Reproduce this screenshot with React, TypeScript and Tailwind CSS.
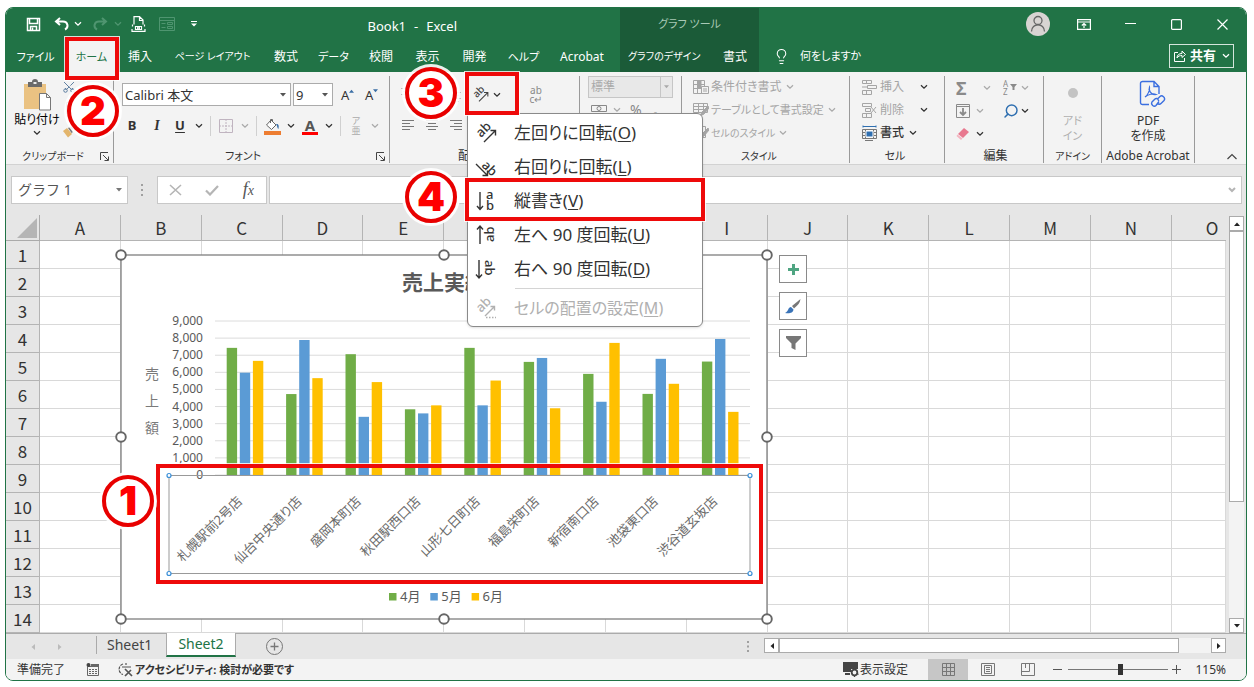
import { ReactNode } from "react"
import { twMerge } from "tailwind-merge"
import { Lightbulb, Scissors, Search } from "lucide-react"

const tabs = [
    { title: 'ファイル', width: 'w-[59px] text-[11px]' },
    { title: 'ホーム', width: 'w-[53px] text-[11px]', active: true },
    { title: '挿入', width: 'w-[44px]' },
    { title: 'ページ レイアウト', width: 'w-[101px] text-[10px]' },
    { title: '数式', width: 'w-[46px]' },
    { title: 'データ', width: 'w-[49px] text-[11px]' },
    { title: '校閲', width: 'w-[46px]' },
    { title: '表示', width: 'w-[47px]' },
    { title: '開発', width: 'w-[47px]' },
    { title: 'ヘルプ', width: 'w-[51px] text-[11px]' },
    { title: 'Acrobat', width: 'w-[66px]' },
]

const columns = ['A', 'B', 'C', 'D', 'E', 'F', 'G', 'H', 'I', 'J', 'K', 'L', 'M', 'N', 'O']
const rows = [1, 2, 3, 4, 5, 6, 7, 8, 9, 10, 11, 12, 13, 14]

const series = [
    { name: '4月', color: '#70AD47' },
    { name: '5月', color: '#5B9BD5' },
    { name: '6月', color: '#FFC000' },
]

const stores = [
    { name: '札幌駅前2号店', sales: [7430, 5980, 6670] },
    { name: '仙台中央通り店', sales: [4730, 7890, 5660] },
    { name: '盛岡本町店', sales: [7060, 3400, 5430] },
    { name: '秋田駅西口店', sales: [3840, 3600, 4070] },
    { name: '山形七日町店', sales: [7430, 4070, 5520] },
    { name: '福島栄町店', sales: [6610, 6840, 3900] },
    { name: '新宿南口店', sales: [5910, 4280, 7720] },
    { name: '池袋東口店', sales: [4740, 6790, 5330] },
    { name: '渋谷道玄坂店', sales: [6630, 7950, 3690] },
]

const ticks = [0, 1000, 2000, 3000, 4000, 5000, 6000, 7000, 8000, 9000]

const menuItems = [
    { label: '左回りに回転', shortcut: 'O', icon: 'ccw' },
    { label: '右回りに回転', shortcut: 'L', icon: 'cw' },
    { label: '縦書き', shortcut: 'V', icon: 'vertical' },
    { label: '左へ 90 度回転', shortcut: 'U', icon: 'up' },
    { label: '右へ 90 度回転', shortcut: 'D', icon: 'down' },
]

function Chevron({ className }: { className?: string }) {
    return (
        <span className={twMerge("w-3 flex-none flex justify-center text-[#333]", className)}>
            <svg width="8" height="6" viewBox="0 0 8 6" fill="none" stroke="currentColor" strokeWidth="1.3"><path d="M1 1.2 4 4.2 7 1.2" /></svg>
        </span>
    )
}

function Caret({ className }: { className?: string }) {
    return <svg width="6" height="4" viewBox="0 0 6 4" className={twMerge("flex-none pointer-events-none fill-[#555]", className)}><path d="M0 0h6L3 3.5z" /></svg>
}

function OrientationIcon({ type, size = 22 }: { type: string, size?: number }) {
    const text = { fontSize: 13, fontWeight: 500, fill: 'currentColor', stroke: 'none' }
    return (
        <svg width={size} height={size} viewBox="0 0 22 22" fill="none" stroke="currentColor" strokeWidth="1.4" className="flex-none overflow-visible">
            {(type === 'ccw' || type === 'settings') && <>
                <text {...text} x="6" y="16" transform="rotate(-45 6 16)">ab</text>
                {type === 'ccw' ? <path d="M9 20 20 9M15.500 8.500H20.500V13.500" /> : <>
                    <path d="M10 19 19 10M15.500 9.500H19.500V13.500" />
                    <path d="M11 20.500h10" strokeDasharray="1.500 1.500" />
                </>}
            </>}
            {type === 'cw' && <>
                <text {...text} x="6" y="10" transform="rotate(45 6 10)">ab</text>
                <path d="M1 8 12 19M12.500 14.500V19.500H7.500" />
            </>}
            {type === 'vertical' && <>
                <text {...text} x="11" y="9">a</text>
                <text {...text} x="11" y="20">b</text>
                <path d="M5 2V19M2 16l3 3.500L8 16" />
            </>}
            {type === 'up' && <>
                <text {...text} x="19" y="18" transform="rotate(-90 19 18)">ab</text>
                <path d="M5 20V2M2 5.500 5 2l3 3.500" />
            </>}
            {type === 'down' && <>
                <text {...text} x="10" y="2" transform="rotate(90 10 2)">ab</text>
                <path d="M4 2V20M1 16.500 4 20l3-3.500" />
            </>}
        </svg>
    )
}

function OrientationMenu() {
    return (
        <div role="menu" className="absolute z-10 -left-px top-full w-[236px] bg-white border border-[#8a8a8a] rounded-md rounded-tl-none pt-[2px] text-[#333] shadow-sm">
            {menuItems.map(({ label, shortcut, icon }) => (
                <button key={label} role="menuitem" className="w-full h-[34px] flex items-center pl-[7px] gap-[17px] text-[17px] leading-6 whitespace-nowrap">
                    <OrientationIcon type={icon} />
                    <span>{label}(<u className="underline-offset-2">{shortcut}</u>)</span>
                </button>
            ))}
            <hr className="ml-[47px] mt-[2px] border-[#d4d4d4]" />
            <button role="menuitem" disabled className="w-full h-[37px] flex items-center pl-[7px] gap-[17px] text-base leading-6 text-[#b0b0b0] whitespace-nowrap">
                <OrientationIcon type="settings" />
                <span>セルの配置の設定(<u className="underline-offset-2">M</u>)</span>
            </button>
        </div>
    )
}

function Group({ label, launcher, className, labelClass, children }: { label: string, launcher?: boolean, className?: string, labelClass?: string, children: ReactNode }) {
    return (
        <section className={twMerge("flex-none mt-1 mb-px border-r border-[#9a9a9a] flex flex-col", className)}>
            <div className="flex-1 min-h-0">{children}</div>
            <div className="h-[14px] flex items-center">
                <h2 className={twMerge("flex-1 text-center text-[11px] leading-[14px] whitespace-nowrap text-[#333]", labelClass)}>{label}</h2>
                {launcher && (
                    <button aria-label={label} className="mr-1">
                        <svg width="9" height="9" viewBox="0 0 9 9" fill="none" stroke="#444"><path d="M.5 8V.5H8M3 3l5 5M8.500 4.500v4h-4" /></svg>
                    </button>
                )}
            </div>
        </section>
    )
}

function TitleBar() {
    return (
        <header className="bg-[#217346] text-white grid grid-cols-[614px_139px_1fr] grid-rows-[32px_32px]">
            <div className="flex items-center pl-[20px] pr-[163px]">
                <button aria-label="上書き保存">
                    <svg width="15" height="15" viewBox="0 0 15 15" fill="none" stroke="white" strokeWidth="1.500"><path d="M1.500 1.500h12v12h-12zM3.500 2v4.500h8V2M4.500 13.500v-4h6v4" /><path d="M6.500 10.500v3" /></svg>
                </button>
                <button aria-label="元に戻す" className="ml-[13px]">
                    <svg width="15" height="14" viewBox="0 0 15 14" fill="none" stroke="white" strokeWidth="2"><path d="M6 1 2 4.500 6 8M2 4.500h7c5 0 6 6 2 8" /></svg>
                </button>
                <Chevron className="text-white ml-[3px]" />
                <button aria-label="やり直し" className="ml-[9px]">
                    <svg width="15" height="14" viewBox="0 0 15 14" fill="none" stroke="#4f9570" strokeWidth="2"><path d="M9 1l4 3.500L9 8M13 4.500H6c-5 0-6 6-2 8" /></svg>
                </button>
                <Chevron className="text-[#4f9570] ml-1" />
                <button aria-label="印刷プレビュー" className="ml-[7px]">
                    <svg width="15" height="16" viewBox="0 0 15 16" fill="none" stroke="white" strokeWidth="1.200"><path d="M3 8.500V.6h5.500L12 4v4.500M8.500 1v3.500H12M1.500 8.500v2M13.500 8.500v2M4.500 10.500h6v3h-6zM1 13v2.400h13V13" /><circle cx="7.500" cy="12" r="1" /></svg>
                </button>
                <button aria-label="フォーム" className="ml-[13px]">
                    <svg width="16" height="14" viewBox="0 0 16 14" fill="none" stroke="#4f9570"><path d="M.5.5h15v13H.5zM.5 3.500h15M2.500 6.500h4M2.500 10.500h4M8.500 5.500h5v2h-5zM8.500 9.500h5v2h-5z" /></svg>
                </button>
                <button aria-label="カスタマイズ" className="ml-4">
                    <svg width="6" height="6" viewBox="0 0 6 6" fill="white"><path d="M0 0h6v1H0zM0 2.500h6L3 5.500z" /></svg>
                </button>
                <h1 className="ml-auto flex gap-2 text-[13px] leading-4 whitespace-nowrap pt-1"><span>Book1</span><span>-</span><span>Excel</span></h1>
            </div>
            <div className="bg-[#1b5b38] text-[#a9c9b6] text-[11px] leading-8 text-center">グラフ ツール</div>
            <div className="flex items-center justify-end pr-[18px]">
                <button aria-label="アカウント" className="size-6 rounded-full bg-[#d8d4d2] flex justify-center items-center">
                    <svg width="16" height="18" viewBox="0 0 16 18" fill="none" stroke="#666" strokeWidth="1.300"><circle cx="8" cy="5.500" r="4" /><path d="M1.500 16.500c0-9 13-9 13 0" /></svg>
                </button>
                <button aria-label="リボンの表示オプション" className="ml-[27px]">
                    <svg width="14" height="11" viewBox="0 0 14 11" fill="none" stroke="white" strokeWidth="1.200"><path d="M.6.6h12.800v9.800H.6zM.6 3h12.800M7 9V5M4.800 6.500 7 4.500l2.200 2" /></svg>
                </button>
                <button aria-label="最小化" className="ml-[34px]"><svg width="11" height="10" stroke="white"><path d="M0 4.500h11" /></svg></button>
                <button aria-label="最大化" className="ml-[35px]"><svg width="11" height="11" fill="none" stroke="white" strokeWidth="1.200"><rect x=".6" y=".6" width="9.800" height="9.800" rx="1" /></svg></button>
                <button aria-label="閉じる" className="ml-[35px]"><svg width="11" height="11" stroke="white" strokeWidth="1.200"><path d="M.5.5l10 10M10.500.5l-10 10" /></svg></button>
            </div>
            <nav className="flex text-xs whitespace-nowrap">
                {tabs.map(({ title, width, active }) => (
                    <button key={title} className={twMerge("flex-none h-full pt-0.5", width, active && 'bg-[#f3f3f3] text-[#217346]')}>{title}</button>
                ))}
            </nav>
            <div className="bg-[#1b5b38] flex items-center pt-0.5 pl-2 gap-5 text-xs whitespace-nowrap">
                <button className="w-[75px] text-[10px] text-left">グラフのデザイン</button>
                <button>書式</button>
            </div>
            <div className="flex items-center pl-[14px] pr-3">
                <Lightbulb size={17} strokeWidth={1.5} />
                <button className="ml-[10px] text-[11px]">何をしますか</button>
                <button className="ml-auto h-6 w-[65px] border border-[#d5e5dc] flex items-center pl-[3px] gap-1 text-[13px] font-bold">
                    <svg width="13" height="12" viewBox="0 0 13 12" fill="none" stroke="white"><path d="M5 2.500H1.500v9h10V8M4 8c0-3 2-4.500 5-4.500V1l3.500 3.500L9 7.500V5.500C7 5.500 5 6 4 8z" /></svg>
                    共有
                    <Chevron className="text-white w-2 ml-0.5" />
                </button>
            </div>
        </header>
    )
}

function Separator() {
    return <span className="w-px h-5 mx-[2px] bg-[#d0d0d0]" />
}

function AlignLines({ className, x }: { className?: string, x: number }) {
    return <svg width="12" height="11" viewBox="0 0 12 11" fill="none" stroke="currentColor" className={twMerge("flex-none text-[#777]", className)}><path d={`M0 .5h12M${x} 3.500h8M0 6.500h12M${x} 9.500h8`} /></svg>
}

function Ribbon() {
    return (
        <div className="h-[93px] bg-[#f3f3f3] border-b border-[#d2d2d2] flex">
            <Group label="クリップボード" launcher className="w-[108px]" labelClass="text-[10px]">
                <div className="flex pl-2">
                    <button className="w-[46px] flex flex-col items-center text-xs leading-4 pt-[3px] whitespace-nowrap">
                        <svg width="30" height="32" viewBox="0 0 30 32">
                            <path fill="#EAC282" d="M2 5h22v25H2z" />
                            <path fill="#6b6b6b" d="M6 3h4a3 3 0 0 1 6 0h4v5H6z" />
                            <path fill="#eee" d="M11.500 3h3v2h-3z" />
                            <path fill="white" stroke="#777" d="M17.500 14.500h7l4 4v12.500h-11zM24.500 14.500v4h4" />
                        </svg>
                        <span className="mt-[1px]">貼り付け</span>
                        <Chevron className="mt-[2px]" />
                    </button>
                    <div className="flex flex-col gap-2 pt-1 pl-[2px]">
                        <button aria-label="切り取り"><Scissors size={14} strokeWidth={1.5} className="text-[#4a6f96] -rotate-90" /></button>
                        <button aria-label="コピー" className="pl-1"><svg width="13" height="15" viewBox="0 0 13 15" fill="#fff" stroke="#777"><path d="M.5.5h7v11h-7zM4.500 3.500h5l3 3v8h-8zM6 8.500h5M6 10.500h5M6 12.500h5" /></svg></button>
                        <button aria-label="書式のコピー"><svg width="13" height="13" viewBox="0 0 13 13"><path fill="#E3B56C" d="M1 6l4-3 5 6-4 3.500z" /><path fill="#777" d="M6 3l2-1 4-2 1 2-3 3 1 2-1.500 1z" /></svg></button>
                    </div>
                </div>
            </Group>
            <Group label="フォント" launcher className="w-[276px] pl-2" labelClass="pr-3">
                <div className="flex items-center pt-[7px]">
                    <div className="w-[169px] h-[23px] flex items-center bg-white border border-[#ababab] pr-1">
                        <select aria-label="フォント名" className="appearance-none flex-1 pl-0.5 text-[13px] leading-5 text-[#333]"><option>Calibri 本文</option></select>
                        <Caret />
                    </div>
                    <div className="w-10 h-[23px] ml-[2px] flex items-center bg-white border border-[#ababab] pr-1">
                        <select aria-label="フォント サイズ" className="appearance-none flex-1 pl-0.5 text-[13px] leading-5 text-[#333]"><option>9</option></select>
                        <Caret />
                    </div>
                    <button aria-label="拡大" className="ml-2 w-4 flex text-[13px] leading-5 text-[#333]">A<Caret className="rotate-180 fill-[#3a6ea5] w-[5px] mt-1" /></button>
                    <button aria-label="縮小" className="ml-[8px] w-4 flex text-[13px] leading-5 text-[#333]">A<Caret className="fill-[#3a6ea5] w-[5px] mt-1" /></button>
                </div>
                <div className="h-[40px] flex items-center gap-[3px] text-[13px] text-[#333]">
                    <button className="w-5 font-bold">B</button>
                    <button className="w-5 ml-[2px] text-sm font-bold italic font-[family-name:'Liberation_Serif',serif]">I</button>
                    <button className="w-5 font-bold underline underline-offset-2">U</button>
                    <Chevron />
                    <Separator />
                    <button aria-label="罫線" className="w-5 flex justify-center">
                        <svg width="14" height="14" fill="none" stroke="#c0b4c0"><path d="M.5.5h13v13H.5z" /><path d="M7 0v14M0 7h14" strokeDasharray="2 1" /></svg>
                    </button>
                    <Chevron className="text-[#aaa]" />
                    <Separator />
                    <button aria-label="塗りつぶしの色" className="w-5 flex justify-center">
                        <svg width="17" height="17" viewBox="0 0 17 17" fill="none"><path d="M7 2 2.500 7l5 4.500L12 7z" fill="#fff" stroke="#666" /><path d="M6.500 5V1.500h2V4" stroke="#666" /><path d="M12 6c3-.5 3 2 2.500 5-1.500-.5-1-3-2.500-5z" fill="#3a6ea5" /><path d="M0 13h17v4H0z" fill="#ED7D31" /></svg>
                    </button>
                    <Chevron />
                    <button aria-label="フォントの色" className="w-5 flex flex-col items-center text-[15px] leading-[14px] font-bold text-[#555]">A<span className="w-4 h-[3px] bg-[#ff0000]" /></button>
                    <Chevron />
                    <Separator />
                    <button className="w-5 flex flex-col items-center text-[9px] leading-[10px] text-[#aaa]"><span>ア</span><span>亜</span></button>
                    <Chevron className="text-[#aaa]" />
                </div>
            </Group>
            <Group label="配置" launcher className="w-[190px]" labelClass="pr-4 text-xs">
                <div className="flex h-[37px] pl-[11px] text-[#777]">
                    <AlignLines x={2} className="mt-3 text-[#bbb]" />
                    <AlignLines x={2} className="mt-3 ml-[12px] text-[#bbb]" />
                    <AlignLines x={2} className="mt-4 ml-[12px] text-[#bbb]" />
                    <div className="relative ml-[7px] flex">
                        <button aria-label="方向" className="w-[46px] flex items-center pl-1 text-[#444]">
                            <OrientationIcon type="ccw" size={17} /><Chevron className="ml-0.5" />
                        </button>
                        <OrientationMenu />
                    </div>
                    <button aria-label="折り返し" className="ml-[10px] w-6 text-[10px] leading-[9px] text-[#888]"><span className="block">ab</span><span className="block">c↵</span></button>
                </div>
                <div className="flex gap-3 pl-[12px] pt-[7px]">
                    <AlignLines x={0} />
                    <AlignLines x={2} />
                    <AlignLines x={4} />
                </div>
            </Group>
            <Group label="数値" launcher className="w-[102px] pl-2" labelClass="text-xs">
                <div className="w-[85px] h-[22px] flex items-center bg-[#e8e8e8] border border-[#c6c6c6]">
                    <select aria-label="表示形式" disabled className="appearance-none flex-1 pl-0.5 text-xs text-[#aaa] opacity-100"><option>標準</option></select>
                    <span className="w-3 h-full border-l border-[#c6c6c6] flex items-center justify-center"><Caret className="fill-[#aaa] w-[5px]" /></span>
                </div>
                <div className="flex items-start h-[22px] pt-0.5 pl-[3px] text-[#888]">
                    <svg width="16" height="12" viewBox="0 0 16 12" fill="none" stroke="currentColor" className="mt-1"><path d="M.5 1.500h15v6H.5z" /><circle cx="8" cy="4.500" r="2" /><path d="M1 10.500h7" /></svg>
                    <Chevron className="text-[#aaa] ml-1 mt-[7px]" />
                    <span className="ml-[7px] text-sm">%</span>
                    <span className="ml-[11px] text-lg leading-4 font-bold">,</span>
                </div>
            </Group>
            <Group label="スタイル" className="w-[168px] pl-[11px]" labelClass="pr-6 text-[10px]">
                <div className="text-[10px] leading-4 text-[#a5a5a5] whitespace-nowrap flex flex-col gap-[7px] pt-[3px]">
                    <button className="flex items-center gap-0.5 text-xs leading-4">
                        <svg width="16" height="14" viewBox="0 0 16 14" fill="none" stroke="currentColor"><path d="M.5.500h11v13H.5zM.5 4.500h11M.5 8.500h11M4.500 0v13" /><path d="M5 1h3v7H5z" fill="currentColor" /><path d="M8.500 6.500h7v7h-7z" fill="#f3f3f3" /><path d="M10 9h4M10 11h4" /></svg>
                        条件付き書式<Chevron className="text-[#aaa]" />
                    </button>
                    <button className="flex items-center gap-0.5 text-[11px] leading-4">
                        <svg width="16" height="14" viewBox="0 0 16 14" fill="none" stroke="currentColor"><path d="M.5.500h14v9H.5zM0 3.500h14M0 6.500h14M5.500 0v9M10.500 0v9" /><path d="M15 3 9 9l-2 4 4-2 5-6z" fill="currentColor" /></svg>
                        テーブルとして書式設定<Chevron className="text-[#aaa]" />
                    </button>
                    <button className="flex items-center gap-0.5">
                        <svg width="16" height="14" viewBox="0 0 16 14" fill="none" stroke="currentColor"><path d="M.5.500h12v11H.5z" /><path d="M15 2 9 8l-2 4 4-2 5-6z" fill="currentColor" /></svg>
                        セルのスタイル<Chevron className="text-[#aaa]" />
                    </button>
                </div>
            </Group>
            <Group label="セル" className="w-[95px] pl-3" labelClass="pr-4">
                <div className="text-xs leading-4 text-[#a5a5a5] whitespace-nowrap flex flex-col gap-[7px] pt-[3px]">
                    <button className="flex items-center gap-[3px]">
                        <svg width="15" height="15" viewBox="0 0 15 15" fill="none" stroke="currentColor"><path d="M.5.500h9v3h-9zM4.500 0v3.500M5.500 5.500h9v3h-9zM0 7h5M.5 10.500h9v4h-9zM4.500 10.500v4" /></svg>
                        挿入<Chevron className="ml-[11px]" />
                    </button>
                    <button className="flex items-center gap-[3px]">
                        <svg width="15" height="15" viewBox="0 0 15 15" fill="none" stroke="currentColor"><path d="M.5.500h9v3h-9zM3.500 5.500h5v3h-5zM9 4l5 6M14 4l-5 6M.5 10.500h9v4h-9zM4.500 10.500v4" /></svg>
                        削除<Chevron className="ml-[11px]" />
                    </button>
                    <button className="flex items-center gap-[3px] text-[#333] font-medium">
                        <svg width="15" height="16" viewBox="0 0 15 16" fill="none" stroke="#777"><path d="M.5 4.500h14v9H.5zM0 7.500h15M0 10.500h15M3.500 4v10M11.500 4v10M3 15.500h8" /><path d="M4 6h7v6H4z" fill="#2f6fb0" stroke="#fff" /><path d="M1 .5v2M14 .5v2M1 1.500h13" stroke="#2f6fb0" /></svg>
                        書式<Chevron />
                    </button>
                </div>
            </Group>
            <Group label="編集" className="w-[99px] pl-[11px]" labelClass="pr-2 text-xs">
                <div className="grid grid-cols-[17px_30px_16px_18px] auto-rows-[23px] items-center text-[#8a8a8a]">
                    <span className="text-lg leading-5 font-bold">Σ</span>
                    <Chevron className="ml-2 text-[#aaa]" />
                    <svg width="15" height="15" viewBox="0 0 15 15" fill="currentColor"><text x="0" y="7" fontSize="8">A</text><text x="0" y="15" fontSize="8">Z</text><path d="M7 4h7l-2.500 3v3h-2V7z" /></svg>
                    <Chevron className="text-[#aaa]" />
                    <svg width="14" height="14" viewBox="0 0 14 14" fill="none" stroke="currentColor"><path d="M.5.500h13v13H.5zM.5 2.500h13" /><path d="M7 4v7M4 8l3 3 3-3" strokeWidth="1.800" /></svg>
                    <Chevron className="text-[#aaa] ml-px" />
                    <Search size={16} strokeWidth={2.2} className="text-[#2f6fb0] -scale-x-100" />
                    <Chevron />
                    <svg width="14" height="14" viewBox="0 0 14 14"><path d="M8 1l5 4-6 6-5-4z" fill="#E8788F" /><path d="M1.500 7.500l5 4L5 13 .5 9z" fill="#F4B5C1" /></svg>
                    <Chevron className="ml-px" />
                </div>
            </Group>
            <Group label="アドイン" className="w-[58px]" labelClass="text-[10px]">
                <div className="flex flex-col items-center pt-3 text-[11px] leading-[15px] text-[#b0b0b0]">
                    <span className="size-[10px] rounded-full bg-[#c3c3c3] mb-[15px]" />
                    <span>アド</span>
                    <span>イン</span>
                </div>
            </Group>
            <Group label="Adobe Acrobat" className="w-[93px]" labelClass="text-xs leading-[14px]">
                <button className="w-full flex flex-col items-center pt-1 text-xs leading-[15px] text-[#333]">
                    <svg width="27" height="29" viewBox="0 0 27 29" fill="none" stroke="#3B6FE0" strokeWidth="1.400" className="ml-2 mb-1">
                        <path d="M10 24.500H3.500a2 2 0 0 1-2-2v-19a2 2 0 0 1 2-2H15l5 5V14M15 1.500v5h5" />
                        <path d="M6 17c3-2 5-7 4.500-10C9 10 12 15 17 14.500c-3-1.500-8 0-11 2.500z" strokeWidth="1.200" />
                        <path d="M18 19.500l3-3c2-2 6 1.500 4 4l-3 3c-1 1-3 1-4-.5M20 21l-1-1M20 21.500l-3 4c-2 2-5.500-1-4-3.500l3-3c1-1 3-.5 3.500.5" />
                    </svg>
                    <span>PDF</span>
                    <span>を作成</span>
                </button>
            </Group>
            <button aria-label="リボンを折りたたむ" className="ml-auto self-end mb-1 mr-[9px]">
                <svg width="10" height="7" fill="none" stroke="#444" strokeWidth="1.200"><path d="M.5 6 5 1.500 9.500 6" /></svg>
            </button>
        </div>
    )
}

function FormulaBar() {
    return (
        <div className="h-[50px] bg-[#e6e6e6] pt-[11px] pl-[5px] pr-1 flex items-start">
            <div className="w-[117px] h-7 bg-white border border-[#c8c8c8] flex items-center pr-[5px]">
                <input aria-label="名前ボックス" defaultValue="グラフ 1" className="flex-1 min-w-0 pl-1.5 text-sm text-[#555] outline-none [font-feature-settings:normal]" />
                <Caret className="fill-[#777]" />
            </div>
            <svg width="3" height="12" className="mx-[13px] mt-2 fill-[#a0a0a0]"><path d="M0 0h2v2H0zM0 5h2v2H0zM0 10h2v2H0z" /></svg>
            <div className="w-[110px] h-7 bg-white border border-[#c8c8c8] flex items-center pl-[11px] pr-3 justify-between">
                <button aria-label="キャンセル"><svg width="13" height="12" stroke="#b5b5b5" strokeWidth="1.600"><path d="M1 1l11 10M12 1 1 11" /></svg></button>
                <button aria-label="入力"><svg width="14" height="11" fill="none" stroke="#b5b5b5" strokeWidth="2.200"><path d="M1 5.500 5 9.500 13 1" /></svg></button>
                <button aria-label="関数の挿入" className="italic text-lg leading-5 text-[#555] font-[family-name:'Liberation_Serif',serif]">f<span className="text-sm">x</span></button>
            </div>
            <div className="ml-[2px] flex-1 h-7 bg-white border border-[#c8c8c8] flex items-center pr-[5px]">
                <input aria-label="数式バー" className="flex-1 min-w-0 px-2 text-sm outline-none" />
                <svg width="8" height="6" fill="none" stroke="#b5b5b5" strokeWidth="2"><path d="M1 1l3 3 3-3" /></svg>
            </div>
        </div>
    )
}

function Chart() {
    const base = 220
    const scale = 154 / 9000
    const handles = [[0, 0], [323, 0], [646, 0], [0, 182], [646, 182], [0, 364], [323, 364], [646, 364]]
    return (
        <svg width="646" height="364" viewBox="0 0 646 364" className="overflow-visible">
            <rect width="646" height="364" fill="white" stroke="#7f7f7f" strokeWidth="1.300" />
            <text x="323" y="35" textAnchor="middle" fontSize="21" fontWeight="bold" fill="#595959">売上実績</text>
            {ticks.map(tick => (
                <g key={tick}>
                    <path d={`M94 ${base - tick * scale}H629`} stroke="#dcdcdc" />
                    <text x="82" y={base - tick * scale + 4} textAnchor="end" fontSize="12" fill="#595959">{tick.toLocaleString('en-US')}</text>
                </g>
            ))}
            {['売', '上', '額'].map((char, i) => (
                <text key={char} x="31" y={124 + i * 27} textAnchor="middle" fontSize="14" fill="#7a7a7a">{char}</text>
            ))}
            {stores.map(({ name, sales }, i) => (
                <g key={name}>
                    {sales.map((value, j) => (
                        <rect key={j} x={105.7 + i * 59.4 + j * 13.1} y={base - value * scale} width="10.4" height={value * scale} fill={series[j].color} />
                    ))}
                    <text x={122 + i * 59.4} y="247" transform={`rotate(-45 ${122 + i * 59.4} 247)`} textAnchor="end" fontSize="13" fill="#6b6b6b">{name}</text>
                </g>
            ))}
            <rect x="48" y="220.500" width="581" height="98" fill="none" stroke="#999" />
            {[[48, 220.5], [629, 220.5], [48, 318.5], [629, 318.5]].map(([x, y]) => (
                <circle key={`${x}-${y}`} cx={x} cy={y} r="2" fill="white" stroke="#3a8fd8" strokeWidth="1.200" />
            ))}
            {series.map(({ name, color }, i) => (
                <g key={name}>
                    <rect x={268 + i * 41.3} y="338" width="7.500" height="7.500" fill={color} />
                    <text x={279 + i * 41.3} y="346" fontSize="13" fill="#595959">{name}</text>
                </g>
            ))}
            {handles.map(([x, y]) => (
                <circle key={`${x}-${y}`} cx={x} cy={y} r="4.800" fill="white" stroke="#666" strokeWidth="1.900" />
            ))}
        </svg>
    )
}

function Sheet() {
    return (
        <div className="relative flex bg-[#e6e6e6]">
            <div className="flex-1 min-w-0">
                <table className="w-full table-fixed border-separate border-spacing-0 bg-white text-[#333] font-[family-name:'Noto_Sans_CJK_JP',sans-serif] [font-feature-settings:normal]">
                    <thead>
                        <tr className="h-[26px] bg-[#e6e6e6]">
                            <th className="w-[34px] p-0 border-r border-b border-[#aaa]">
                                <svg width="20" height="20" className="ml-[11px]" fill="#b5b5b5"><path d="M20 0v20H0z" /></svg>
                            </th>
                            {columns.map(column => (
                                <th key={column} className={twMerge("p-0 border-r border-b border-[#b4b4b4] text-[17px] leading-5 font-normal", column === 'O' && 'w-[54px] pl-[26px] border-r-0')}>{column}</th>
                            ))}
                        </tr>
                    </thead>
                    <tbody>
                        {rows.map(row => (
                            <tr key={row} className="h-7">
                                <th className="p-0 bg-[#e6e6e6] border-r border-b border-[#b4b4b4] text-[17px] leading-5 font-normal">{row}</th>
                                {columns.map(column => <td key={column} className="p-0 border-r border-b border-[#d9d9d9]"></td>)}
                            </tr>
                        ))}
                    </tbody>
                </table>
            </div>
            <div className="w-[15px] ml-[3px] mr-[2px] mt-px bg-[#f3f3f3] flex flex-col">
                <button aria-label="上へ" className="h-[15px] bg-white border border-[#ababab] flex items-center justify-center"><Caret className="rotate-180 w-2 fill-[#222]" /></button>
                <div className="h-[271px] bg-white border border-[#ababab]"></div>
                <button aria-label="下へ" className="mt-auto h-[15px] bg-white border border-[#ababab] flex items-center justify-center"><Caret className="w-2 fill-[#222]" /></button>
            </div>
            <div className="absolute left-[115px] top-10 flex gap-3">
                <Chart />
                <div className="flex flex-col gap-[9px]">
                    <button aria-label="グラフ要素" className="size-7 bg-white border border-[#8a8a8a] flex items-center justify-center"><svg width="11" height="11" stroke="#4fa582" strokeWidth="3"><path d="M5.500 0v11M0 5.500h11" /></svg></button>
                    <button aria-label="グラフ スタイル" className="size-7 bg-white border border-[#8a8a8a] flex items-center justify-center"><svg width="16" height="15" viewBox="0 0 16 15"><path d="M15.500 0 7 7l2 2.500C13 6 15 4 15.500 0z" fill="#777" /><path d="M6 8c-3 0-2 4-6 6 4 .5 8 .5 8.500-3.500z" fill="#3a74b8" /></svg></button>
                    <button aria-label="グラフ フィルター" className="size-7 bg-white border border-[#8a8a8a] flex items-center justify-center"><svg width="15" height="14"><path d="M0 0h15v2L9.500 7.500V14l-4-2V7.500L0 2z" fill="#777" /></svg></button>
                </div>
            </div>
        </div>
    )
}

function SheetTabs() {
    return (
        <div className="h-[26px] bg-[#e6e6e6] border-t border-[#ababab] flex text-[#444]">
            <div className="w-[90px] flex items-center pl-6 gap-[21px]">
                <Caret className="rotate-90 fill-[#bbb]" />
                <Caret className="-rotate-90 fill-[#bbb]" />
            </div>
            <button className="mt-0.5 mb-[5px] pl-[10px] w-[70px] border-l border-[#aaa] text-left text-sm leading-4">Sheet1</button>
            <button className="w-[70px] h-[24px] -mt-px bg-white border-x border-x-[#ababab] border-b-2 border-b-[#217346] text-sm leading-5 text-[#217346]">Sheet2</button>
            <button aria-label="新しいシート" className="ml-[30px] self-center">
                <svg width="17" height="17" fill="none" stroke="#777"><circle cx="8.500" cy="8.500" r="8" /><path d="M8.500 4.500v8M4.500 8.500h8" strokeWidth="1.300" /></svg>
            </button>
            <svg width="3" height="11" className="ml-auto mr-[14px] self-center fill-[#a0a0a0]"><path d="M0 0h2v2H0zM0 4.500h2v2H0zM0 9h2v2H0z" /></svg>
            <div className="w-[462px] h-[15px] mr-5 mt-1 bg-[#f3f3f3] flex">
                <button aria-label="左へ" className="w-[15px] bg-white border border-[#ababab] flex items-center justify-center"><Caret className="rotate-90 flex-none w-2 fill-[#222]" /></button>
                <div className="w-[400px] bg-white border border-[#ababab]"></div>
                <button aria-label="右へ" className="ml-auto w-[15px] bg-white border border-[#ababab] flex items-center justify-center"><Caret className="-rotate-90 flex-none w-2 fill-[#222]" /></button>
            </div>
        </div>
    )
}

function StatusBar() {
    return (
        <footer className="h-[21px] bg-[#f3f3f3] flex items-center pl-[11px] pr-5 text-xs leading-4 text-[#333] whitespace-nowrap">
            <span>準備完了</span>
            <svg width="13" height="13" viewBox="0 0 13 13" fill="none" stroke="#666" className="ml-[21px]"><path d="M1.500 3.500h11v9h-11z" /><path d="M3 6.500h8M3 8.500h8M3 10.500h8" strokeDasharray="2 1" /><path d="M5 1h8v3H5z" fill="#666" stroke="none" /><circle cx="2.500" cy="2" r="2" fill="#444" stroke="none" /></svg>
            <button className="ml-[18px] flex items-center gap-0.5 text-[11px] font-bold">
                <svg width="16" height="14" viewBox="0 0 16 14" fill="none" stroke="#555" strokeWidth="1.200"><path d="M6 1a5.500 5.500 0 0 0 0 10.500" strokeDasharray="3 1" /><path d="M9 0v2M5 4h9" /><path d="M8 6l7 7M14 7l-6 6" strokeWidth="1.700" /></svg>
                アクセシビリティ: 検討が必要です
            </button>
            <button className="ml-auto flex items-center gap-px">
                <svg width="16" height="15" viewBox="0 0 16 15"><path d="M0 0h15v7H8v3H0zM2 11h5v2H2z" fill="#444" /><circle cx="11.500" cy="10.500" r="2.800" fill="#f3f3f3" stroke="#444" strokeWidth="1.800" /><path d="M11.500 6v2M11.500 13v2M7.500 8.500l1.500 1M14 11.500l1.500 1" stroke="#444" strokeWidth="1.300" /></svg>
                表示設定
            </button>
            <button aria-label="標準" className="ml-5 w-10 h-full bg-[#c6c6c6] flex items-center justify-center"><svg width="13" height="13" fill="none" stroke="#777"><path d="M.5.500h12v12H.5zM4.500 0v13M8.500 0v13M0 4.500h13M0 8.500h13" /></svg></button>
            <button aria-label="ページ レイアウト" className="ml-[13px]"><svg width="14" height="13" fill="none" stroke="#777"><path d="M.5.500h13v12H.5zM3.500 2.500h7v8h-7zM5 4.500h4M5 6.500h4M5 8.500h4" /></svg></button>
            <button aria-label="改ページ プレビュー" className="ml-[26px]"><svg width="14" height="13" fill="none" stroke="#777"><path d="M.5.500h13v12H.5zM.5 8.500h8V.5M4.500 0v5" /></svg></button>
            <button aria-label="縮小" className="ml-[18px]"><svg width="9" height="9" stroke="#555"><path d="M0 4.500h9" /></svg></button>
            <input type="range" aria-label="ズーム" min="0" max="100" defaultValue="53" className="ml-[6px] w-[100px] h-[13px] appearance-none bg-linear-to-b from-transparent from-46% via-[#777] via-50% to-transparent to-54% [&::-webkit-slider-thumb]:appearance-none [&::-webkit-slider-thumb]:w-[5px] [&::-webkit-slider-thumb]:h-[11px] [&::-webkit-slider-thumb]:bg-[#333]" />
            <button aria-label="拡大" className="ml-[4px]"><svg width="9" height="9" stroke="#555"><path d="M0 4.500h9M4.500 0v9" /></svg></button>
            <span className="ml-3 w-[33px] text-right">115%</span>
        </footer>
    )
}

function Step({ number, className }: { number: number, className: string }) {
    return (
        <span className={twMerge("absolute size-[52px] rounded-full bg-white border-4 border-[#e80000] ring-3 ring-white/90 flex items-center justify-center text-[#ff0000] text-[40px] leading-none font-black font-[family-name:Inter,'Noto_Sans',sans-serif]", className)}>{number}</span>
    )
}

function Frame({ className }: { className: string }) {
    return <span className={twMerge("absolute border-4 border-[#ee0a0a] ring-1 ring-white/80", className)} />
}

function App() {
    return (
        <div className="relative min-h-screen bg-white pt-[7px] pl-[5px] pr-[7px] font-[family-name:'Noto_Sans','Noto_Sans_CJK_JP',sans-serif] [font-feature-settings:'palt']">
            <main className="border border-[#217346] rounded-lg overflow-hidden">
                <TitleBar />
                <Ribbon />
                <FormulaBar />
                <Sheet />
                <SheetTabs />
                <StatusBar />
            </main>
            <div className="absolute inset-0 z-20 pointer-events-none">
                <Frame className="left-[65px] top-[37px] w-[54px] h-[43px]" />
                <Frame className="left-[465px] top-[72px] w-[54px] h-[43px]" />
                <Frame className="left-[465px] top-[178px] w-[240px] h-[43px]" />
                <Frame className="left-[156px] top-[464px] w-[607px] h-[120px]" />
                <Step number={1} className="left-[102px] top-[475px]" />
                <Step number={2} className="left-[67px] top-[85px]" />
                <Step number={3} className="left-[405px] top-[67px]" />
                <Step number={4} className="left-[405px] top-[171px]" />
            </div>
        </div>
    )
}

export default App
